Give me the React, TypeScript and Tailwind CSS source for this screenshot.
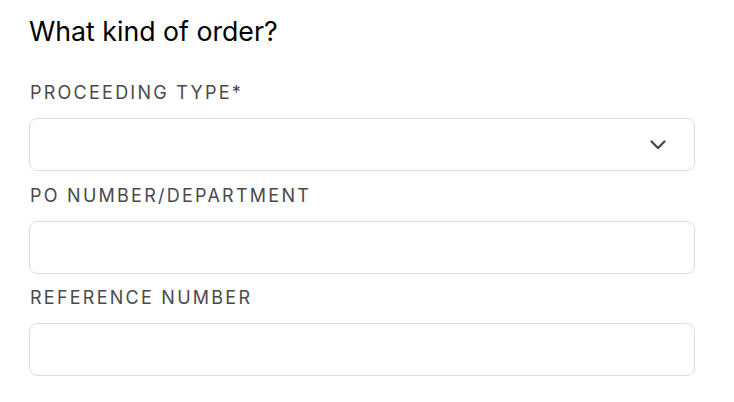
const fields = [
  { label: "PROCEEDING TYPE*", select: true },
  { label: "PO NUMBER/DEPARTMENT", select: false },
  { label: "REFERENCE NUMBER", select: false },
];

export default function App() {
  return (
    <div className="min-h-[402px] w-[734px] bg-white pl-[29px] pt-[14px] font-['Inter','Liberation_Sans',sans-serif]">
      <h1 className="text-[26.7px] leading-[34px] font-normal text-black">What kind of order?</h1>
      <div className="mt-[33px] flex w-[666px] flex-col gap-[12.5px]">
        {fields.map((f) => (
          <div key={f.label} className="flex flex-col gap-[13px]">
            <label className="pl-px text-[18px] leading-[24px] tracking-[0.125em] text-[#4a4a4a]">
              {f.label}
            </label>
            <div className="flex h-[53px] items-center justify-end rounded-[8px] border border-[#dedede] bg-white pr-[28px]">
              {f.select && (
                <svg width="16" height="10" viewBox="0 0 16 10" fill="none" className="text-[#444]">
                  <path d="M1.5 1.5 8 8l6.5-6.5" stroke="currentColor" strokeWidth="2.2" strokeLinecap="round" strokeLinejoin="round" />
                </svg>
              )}
            </div>
          </div>
        ))}
      </div>
    </div>
  );
}
